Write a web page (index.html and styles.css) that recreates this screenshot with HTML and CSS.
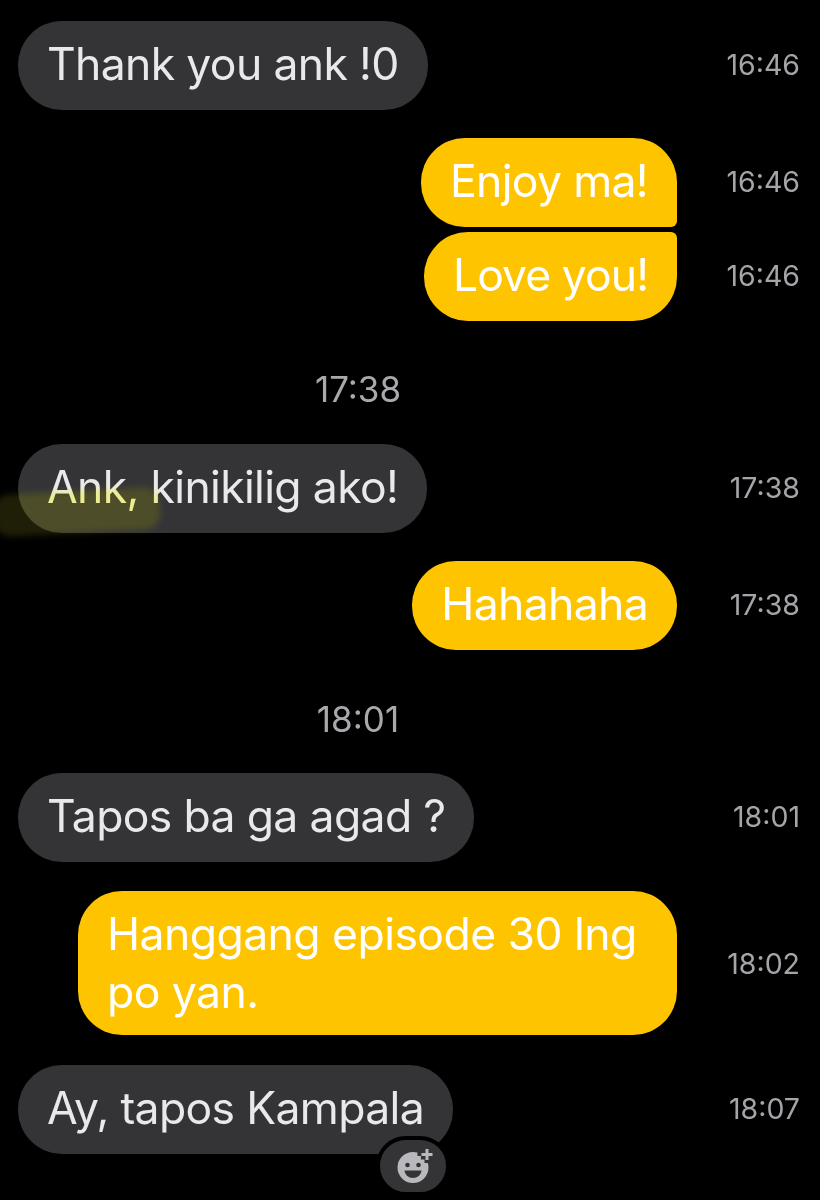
FILE: index.html
```html
<!DOCTYPE html>
<html lang="tl">
<head>
<meta charset="utf-8">
<title>Chat</title>
<link rel="stylesheet" href="styles.css">
</head>
<body>
<main class="chat">
  <div class="row"><div class="bubble in">Thank you ank !0</div><time class="stamp">16:46</time></div>
  <div class="row out gap-l"><div class="bubble sent tail-bottom">Enjoy ma!</div><time class="stamp">16:46</time></div>
  <div class="row out gap-s"><div class="bubble sent tail-top tight">Love you!</div><time class="stamp">16:46</time></div>
  <div class="divider first">17:38</div>
  <div class="row"><div class="bubble in">Ank, kinikilig ako!</div><time class="stamp">17:38</time></div>
  <div class="row out gap-l"><div class="bubble sent">Hahahaha</div><time class="stamp">17:38</time></div>
  <div class="divider second">18:01</div>
  <div class="row"><div class="bubble in">Tapos ba ga agad ?</div><time class="stamp">18:01</time></div>
  <div class="row out gap-m"><div class="bubble sent multi">Hanggang episode 30 lng po yan.</div><time class="stamp">18:02</time></div>
  <div class="row gap-xl">
    <div class="bubble in has-reaction">Ay, tapos Kampala
      <span class="reaction">
        <svg viewBox="-3 -1 44 44" width="44" height="44" aria-hidden="true">
          <path class="face" fill-rule="evenodd" d="M19 7a15.5 15.5 0 1 0 15.5 15.5c0-1.6-.2-3-.7-4.400h-3.300v-3.600h-3.600v-3.600h-3.500V7.600A15.500 15.500 0 0 0 19 7z"/>
          <circle class="feature" cx="13.500" cy="20" r="2.300"/>
          <circle class="feature" cx="24.500" cy="20" r="2.300"/>
          <path class="feature" d="M10.500 25.500h17a8.500 7.500 0 0 1-17 0z"/>
          <path class="plus" d="M33 4v11M27.500 9.500h11"/>
        </svg>
      </span>
    </div>
    <time class="stamp">18:07</time>
  </div>
  <div class="smear" aria-hidden="true"></div>
</main>
</body>
</html>
```

FILE: styles.css
```css
* { box-sizing: border-box; }
html, body { margin: 0; height: 100%; background: #000; }
body { overflow: hidden; font-family: Inter, "Noto Sans", sans-serif; }
.chat { position: relative; width: 820px; height: 1200px; padding: 21px 20px 0 18px; display: flex; flex-direction: column; }
.row { display: flex; align-items: center; justify-content: space-between; }
.row.out { justify-content: flex-end; gap: 43px; }
.gap-s { margin-top: 5px; }
.gap-l { margin-top: 28px; }
.gap-m { margin-top: 29px; }
.gap-xl { margin-top: 30px; }
.bubble { position: relative; padding: 15px 29px 18px; border-radius: 44px; font-size: 44.5px; line-height: 56px; letter-spacing: -0.65px; }
.tight { letter-spacing: -0.95px; }
.in { background: #343437; color: #e9e9eb; }
.sent { background: #ffc400; color: #fff; }
.tail-bottom { border-bottom-right-radius: 6px; }
.tail-top { border-top-right-radius: 6px; }
.multi { width: 599px; padding: 14px 29px; line-height: 58px; letter-spacing: -0.55px; }
.stamp { width: 80px; padding-bottom: 2px; text-align: right; font-size: 28.5px; line-height: 34px; color: #a5a5a9; white-space: nowrap; }
.multi + .stamp { padding: 2px 0 0; }
.divider { width: 680px; text-align: center; font-size: 35px; line-height: 34px; color: #a9a9ad; }
.divider.first { margin-top: 51px; margin-bottom: 38px; }
.divider.second { margin-top: 52px; margin-bottom: 37px; }
.reaction { position: absolute; left: 358px; top: 71px; width: 74px; height: 60px; display: flex; align-items: center; justify-content: center; background: #343437; border: 4px solid #000; border-radius: 30px; }
.face { fill: #b9b9bd; }
.feature { fill: #343437; }
.plus { fill: none; stroke: #b9b9bd; stroke-width: 3; }
.smear { position: absolute; left: -6px; top: 491px; width: 166px; height: 42px; }
.smear::before, .smear::after { content: ""; position: absolute; inset: 0; border-radius: 16px; transform: rotate(-3deg); filter: blur(3px); }
.smear::before { background: #ffff9a; mix-blend-mode: multiply; }
.smear::after { background: #1f1f08; mix-blend-mode: screen; }
```
